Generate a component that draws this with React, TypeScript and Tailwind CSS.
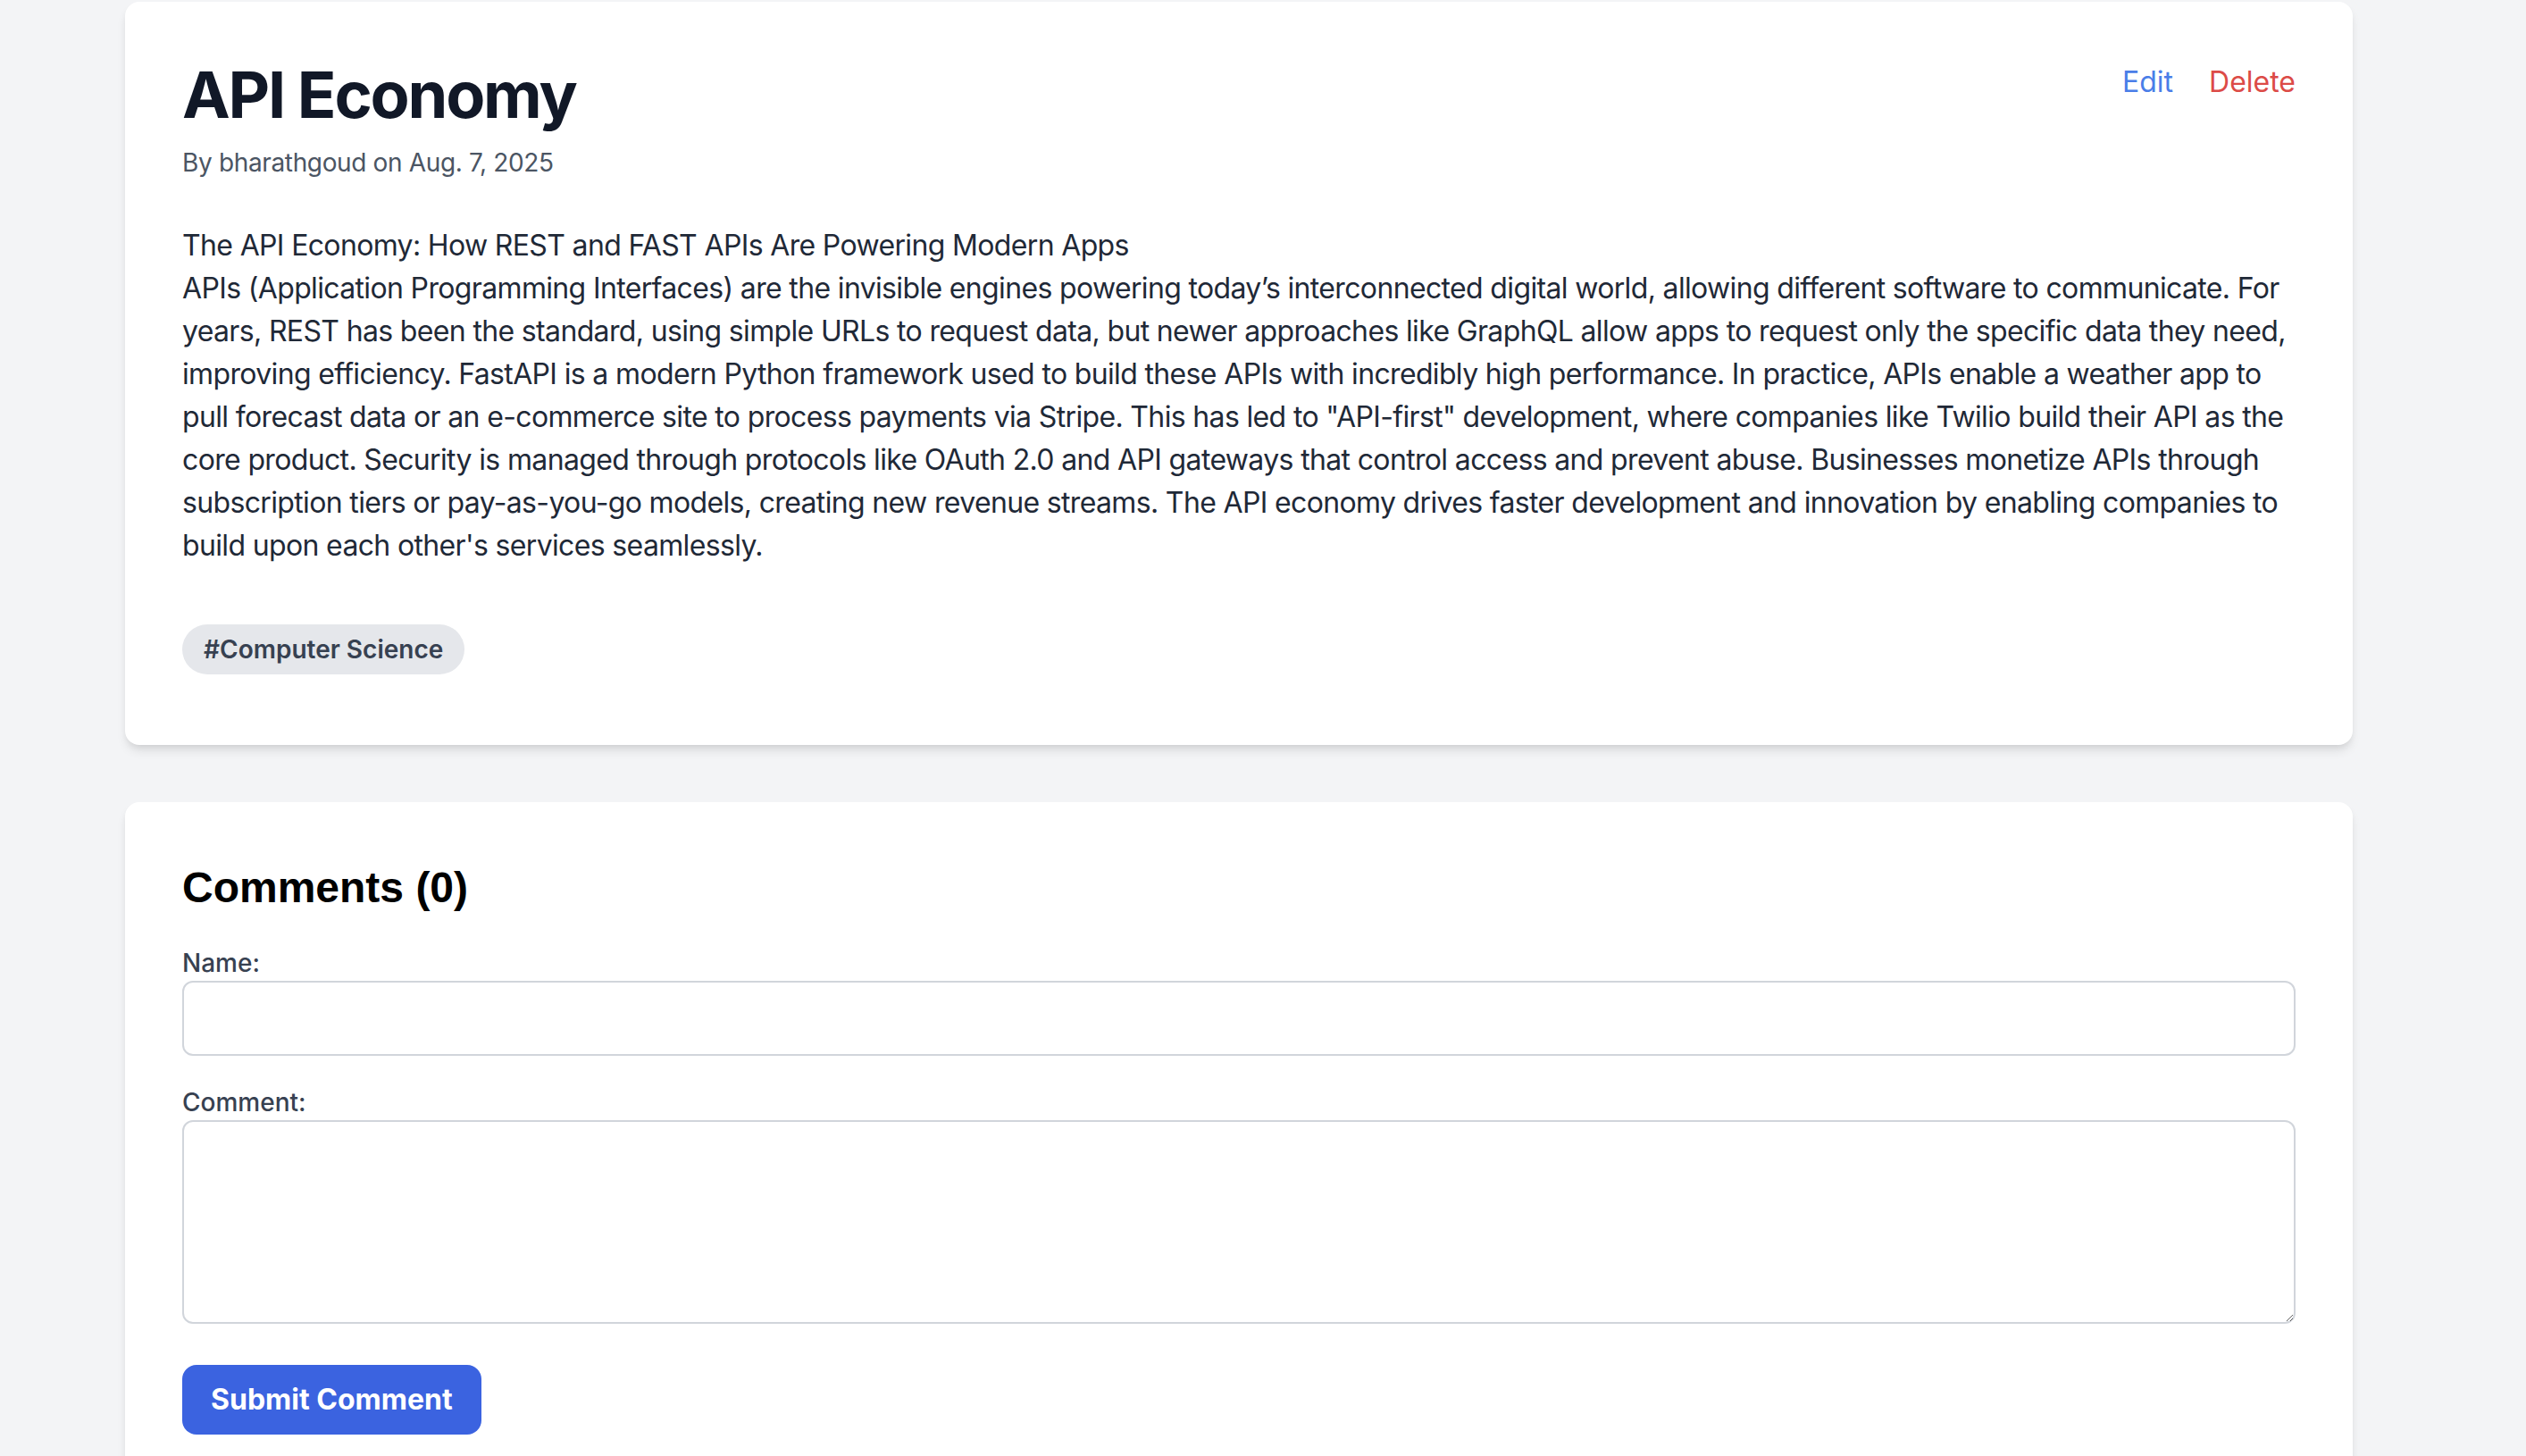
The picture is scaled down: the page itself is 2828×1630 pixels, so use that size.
import React from "react";

// body text, broken where the original page wraps it
const lines = [
  "The API Economy: How REST and FAST APIs Are Powering Modern Apps",
  "APIs (Application Programming Interfaces) are the invisible engines powering today’s interconnected digital world, allowing different software to communicate. For",
  "years, REST has been the standard, using simple URLs to request data, but newer approaches like GraphQL allow apps to request only the specific data they need,",
  "improving efficiency. FastAPI is a modern Python framework used to build these APIs with incredibly high performance. In practice, APIs enable a weather app to",
  'pull forecast data or an e-commerce site to process payments via Stripe. This has led to "API-first" development, where companies like Twilio build their API as the',
  "core product. Security is managed through protocols like OAuth 2.0 and API gateways that control access and prevent abuse. Businesses monetize APIs through",
  "subscription tiers or pay-as-you-go models, creating new revenue streams. The API economy drives faster development and innovation by enabling companies to",
  "build upon each other's services seamlessly.",
];

export default function App() {
  return (
    <div className="min-h-screen bg-[#f3f4f6] pt-[2px] font-['Inter','Noto_Sans',sans-serif]">
      <div className="ml-[140px] w-[2494px]">
        {/* Post */}
        <article className="mb-16 rounded-2xl bg-white px-16 pt-16 pb-[79px] shadow-[0_8px_12px_-2px_rgba(0,0,0,0.1),0_4px_8px_-4px_rgba(0,0,0,0.1)]">
          <div className="flex items-start justify-between">
            <h1 className="text-[72px] leading-[80px] font-bold tracking-[-2.2px] text-[#111827]">API Economy</h1>
            <div className="mt-[2px] flex gap-[40px] text-[32px] leading-[48px]">
              <a className="text-[#4a7ee8]" href="#">Edit</a>
              <a className="text-[#dc4b47]" href="#">Delete</a>
            </div>
          </div>
          <p className="mt-4 text-[28px] leading-[40px] tracking-[-0.35px] text-[#4b5563]">By bharathgoud on Aug. 7, 2025</p>

          <div className="mt-[49px] text-[32px] leading-[48px] tracking-[-0.65px] text-[#1f2937]">
            {lines.map((line, i) => (
              <span key={i} className="block whitespace-nowrap">
                {line}
              </span>
            ))}
          </div>

          <div className="mt-16 flex">
            <span className="rounded-full bg-[#e5e7eb] px-6 py-2 text-[28px] leading-[40px] font-semibold text-[#374151]">
              #Computer Science
            </span>
          </div>
        </article>

        {/* Comments */}
        <section className="rounded-2xl bg-white px-16 pt-16 pb-16 shadow-[0_8px_12px_-2px_rgba(0,0,0,0.1),0_4px_8px_-4px_rgba(0,0,0,0.1)]">
          <h2 className="mb-8 font-['Liberation_Sans',Arial,sans-serif] text-[48px] leading-[64px] font-bold text-black">
            Comments (0)
          </h2>
          <form>
            <div className="mb-8">
              <label className="block text-[28px] leading-[40px] font-medium text-[#374151]">Name:</label>
              <input
                type="text"
                className="block h-[84px] w-full rounded-xl border-2 border-[#d1d5db] px-6 text-[32px] outline-none"
              />
            </div>
            <div>
              <label className="block text-[28px] leading-[40px] font-medium text-[#374151]">Comment:</label>
              <textarea
                rows={4}
                className="block h-[228px] w-full rounded-xl border-2 border-[#d1d5db] px-6 py-4 text-[32px] leading-[48px] outline-none"
              />
            </div>
            <button
              type="button"
              className="mt-[46px] rounded-2xl bg-[#3b63e0] px-8 py-[15px] text-[32px] leading-[48px] font-bold text-white"
            >
              Submit Comment
            </button>
          </form>
        </section>
      </div>
    </div>
  );
}
